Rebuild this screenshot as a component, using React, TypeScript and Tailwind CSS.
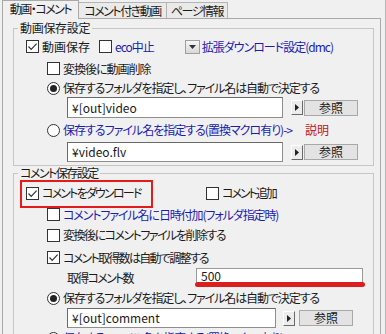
import React from "react";

const blue = "text-[#1c1cb0]";

function Check({ checked = false }: { checked?: boolean }) {
  return (
    <span className="flex h-[13px] w-[13px] shrink-0 items-center justify-center border border-[#333] bg-white">
      {checked && (
        <svg width="11" height="11" viewBox="0 0 11 11">
          <polyline points="1.5,5.5 4.2,8.3 9.6,2.6" fill="none" stroke="#333" strokeWidth="1.2" />
        </svg>
      )}
    </span>
  );
}

function Radio({ selected = false }: { selected?: boolean }) {
  return (
    <span className="flex h-[13px] w-[13px] shrink-0 items-center justify-center rounded-full border border-[#333] bg-white">
      {selected && <span className="h-[7px] w-[7px] rounded-full bg-[#222]" />}
    </span>
  );
}

function TextBox({ value, w, h = 20 }: { value: string; w: string; h?: number }) {
  return (
    <div
      className={`${w} flex shrink-0 items-center border border-[#8e8e8e] border-l-[#6a6a6a] border-t-[#6a6a6a] bg-white pl-[4px] tracking-normal`}
      style={{ height: h }}
    >
      {value}
    </div>
  );
}

function ArrowBtn() {
  return (
    <span className="flex h-[15px] w-[12px] shrink-0 items-center justify-center border border-b-[#6a6a6a] border-l-white border-r-[#6a6a6a] border-t-white bg-[#ececec]">
      <svg width="4" height="7" viewBox="0 0 4 7">
        <polygon points="0,0 4,3.5 0,7" fill="#222" />
      </svg>
    </span>
  );
}

function BrowseBtn() {
  return (
    <span className="flex h-[16px] w-[54px] shrink-0 items-center justify-center border border-[#a8a8a8] bg-[#e3e3e3] tracking-normal">
      参照
    </span>
  );
}

export default function App() {
  return (
    <div className="h-[334px] w-[386px] overflow-hidden border-r border-[#b8b8b8] bg-[#f0f0f0] font-['Noto_Sans_CJK_JP',sans-serif] text-[12px] leading-[14px] tracking-[-1px] text-[#1a1a1a] [font-feature-settings:'palt']">
      {/* tabs */}
      <div className="flex h-[18px] items-end pl-[2px] tracking-[-1.5px]">
        <div className="relative z-10 mb-[-1px] flex h-[19px] w-[77px] items-center justify-center border border-b-0 border-[#a9a9a9] bg-[#f0f0f0] pb-[2px]">
          動画・コメント
        </div>
        <div className="flex h-[16px] w-[88px] items-center justify-center border-r border-t border-[#b4b4b4] bg-[#eaeaea]">
          コメント付き動画
        </div>
        <div className="flex h-[16px] w-[61px] items-center justify-center border-r border-t border-[#b4b4b4] bg-[#eaeaea]">
          ページ情報
        </div>
      </div>

      {/* panel */}
      <div className="ml-[2px] h-[320px] w-[379px] border border-[#a9a9a9] pl-[10px] pr-[6px] pt-[2px]">
        <fieldset className="border border-[#c6c6c6] pb-[3px]">
          <legend className="ml-[4px] px-[2px] leading-[14px] tracking-[-0.3px]">動画保存設定</legend>
          <div className="flex h-[23px] items-center pl-[12px]">
            <Check checked />
            <span className="ml-[3px] tracking-normal">動画保存</span>
            <span className="ml-[9px]">
              <Check />
            </span>
            <span className={`ml-[3px] ${blue}`}>eco中止</span>
            <span className="ml-[31px] flex h-[14px] w-[15px] items-center justify-center border border-[#a0a0a0] bg-gradient-to-b from-[#f6f6f6] to-[#d8d8d8]">
              <svg width="7" height="4" viewBox="0 0 7 4">
                <polygon points="0,0 7,0 3.5,4" fill="#333" />
              </svg>
            </span>
            <span className={`ml-[2px] ${blue}`}>拡張ダウンロード設定(dmc)</span>
          </div>
          <div className="flex h-[21px] items-center pl-[33px]">
            <Check />
            <span className="ml-[3px]">変換後に動画削除</span>
          </div>
          <div className="flex h-[18px] items-center pl-[33px]">
            <Radio selected />
            <span className="ml-[3px] tracking-[-1.1px]">保存するフォルダを指定し、ファイル名は自動で決定する</span>
          </div>
          <div className="flex h-[21px] items-center pl-[53px]">
            <TextBox value="¥[out]video" w="w-[216px]" h={21} />
            <span className="ml-[8px]">
              <ArrowBtn />
            </span>
            <span className="ml-[1px]">
              <BrowseBtn />
            </span>
          </div>
          <div className="flex h-[24px] items-center pl-[33px]">
            <Radio />
            <span className={`ml-[3px] ${blue}`}>保存するファイル名を指定する(置換マクロ有り)-&gt;</span>
            <span className="ml-[13px] text-[#c41414] tracking-normal">説明</span>
          </div>
          <div className="flex h-[20px] items-center pl-[53px]">
            <TextBox value="¥video.flv" w="w-[216px]" />
            <span className="ml-[8px]">
              <ArrowBtn />
            </span>
            <span className="ml-[1px]">
              <BrowseBtn />
            </span>
          </div>
        </fieldset>

        <fieldset className="border border-[#c6c6c6]">
          <legend className="ml-[4px] px-[2px] leading-[14px] tracking-[-1.5px]">コメント保存設定</legend>
          <div className="relative flex h-[26px] items-center pl-[12px]">
            <div className="flex w-[180px] items-center">
              <Check checked />
              <span className="ml-[3px] tracking-[-1.8px]">コメントをダウンロード</span>
            </div>
            <Check />
            <span className="ml-[3px] tracking-[-2px]">コメント追加</span>
            {/* red annotation box */}
            <div className="absolute left-[6px] top-0 z-10 h-[28px] w-[133px] border-2 border-[#e31b1b]" />
          </div>
          <div className="flex h-[17px] items-center pl-[33px]">
            <Check />
            <span className={`ml-[3px] tracking-[-1.1px] ${blue}`}>コメントファイル名に日時付加(フォルダ指定時)</span>
          </div>
          <div className="flex h-[24px] items-center pl-[33px]">
            <Check />
            <span className="ml-[3px] tracking-[-1.5px]">変換後にコメントファイルを削除する</span>
          </div>
          <div className="flex h-[21px] items-center pl-[33px]">
            <Check checked />
            <span className="ml-[3px] tracking-[-1.7px]">コメント取得数は自動で調整する</span>
          </div>
          <div className="flex h-[20px] items-start pl-[53px]">
            <span className="w-[129px] pt-[3px] tracking-[-1.7px]">取得コメント数</span>
            <div className="relative">
              <div className="flex h-[15px] w-[167px] items-center border border-[#9a9a9a] bg-white pl-[4px] tracking-normal">500</div>
              <div className="absolute bottom-[-4px] left-[-1px] right-[-2px] h-[5px] rounded-full bg-[#dc1e1e]" />
            </div>
          </div>
          <div className="flex h-[20px] items-center pl-[33px]">
            <Radio selected />
            <span className="ml-[3px] tracking-[-1.1px]">保存するフォルダを指定し、ファイル名は自動で決定する</span>
          </div>
          <div className="flex h-[20px] items-center pl-[53px]">
            <TextBox value="¥[out]comment" w="w-[209px]" />
            <span className="ml-[7px]">
              <ArrowBtn />
            </span>
            <span className="ml-[4px]">
              <BrowseBtn />
            </span>
          </div>
          <div className="flex h-[20px] items-center pl-[33px]">
            <Radio />
            <span className={`ml-[3px] ${blue}`}>保存するファイル名を指定する(置換マクロ有り)-&gt;</span>
          </div>
        </fieldset>
      </div>
    </div>
  );
}
